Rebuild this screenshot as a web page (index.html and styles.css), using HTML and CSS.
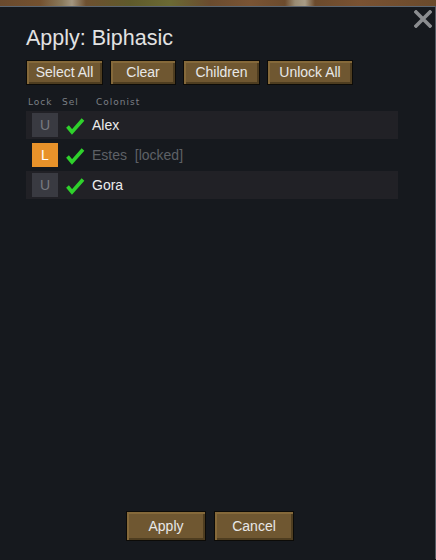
FILE: index.html
```html
<!DOCTYPE html>
<html>
<head>
<meta charset="utf-8">
<link rel="stylesheet" href="styles.css">
</head>
<body>
<div class="backdrop"></div>
<div class="window">
  <button class="close" aria-label="Close">
    <svg width="18" height="18" viewBox="0 0 18 18"><path d="M2 2 L16 16 M16 2 L2 16" stroke="#8b8d90" stroke-width="3.6" stroke-linecap="square"/></svg>
  </button>
  <h1 class="title">Apply: Biphasic</h1>
  <div class="toolbar">
    <button class="btn btn-select">Select All</button>
    <button class="btn btn-clear">Clear</button>
    <button class="btn btn-children">Children</button>
    <button class="btn btn-unlock">Unlock All</button>
  </div>
  <div class="header">
    <span class="h-lock">Lock</span>
    <span class="h-sel">Sel</span>
    <span class="h-col">Colonist</span>
  </div>
  <div class="list">
    <div class="row shaded">
      <span class="lock">U</span>
      <svg class="check" width="20" height="18" viewBox="0 0 20 18"><path d="M2.5 9.5 L7 15 L18 2.5" fill="none" stroke="#2fd12c" stroke-width="3.6" stroke-linejoin="miter"/></svg>
      <span class="name">Alex</span>
    </div>
    <div class="row">
      <span class="lock locked">L</span>
      <svg class="check" width="20" height="18" viewBox="0 0 20 18"><path d="M2.5 9.5 L7 15 L18 2.5" fill="none" stroke="#2fd12c" stroke-width="3.6" stroke-linejoin="miter"/></svg>
      <span class="name dim">Estes&nbsp;&nbsp;[locked]</span>
    </div>
    <div class="row shaded">
      <span class="lock">U</span>
      <svg class="check" width="20" height="18" viewBox="0 0 20 18"><path d="M2.5 9.5 L7 15 L18 2.5" fill="none" stroke="#2fd12c" stroke-width="3.6" stroke-linejoin="miter"/></svg>
      <span class="name">Gora</span>
    </div>
  </div>
  <div class="footer">
    <button class="btn btn-big">Apply</button>
    <button class="btn btn-big">Cancel</button>
  </div>
</div>
</body>
</html>
```
FILE: styles.css
```css
html, body {
  margin: 0;
  padding: 0;
  background: #16191e;
  font-family: "Liberation Sans", Arial, sans-serif;
}
.backdrop {
  height: 6px;
  background: linear-gradient(90deg, #6a4a2e 0px, #74512f 40px, #8a7a5c 62px, #a39680 72px, #6e5030 86px, #5f5a2b 130px, #6b6a34 170px, #6a4b2e 210px, #7a5434 250px, #6c4b2d 285px, #9a8c74 295px, #a89c86 305px, #6b4a2c 315px, #7a5232 360px, #6a4a2c 436px);
}
.window {
  position: relative;
  height: 553px;
  box-sizing: border-box;
  border-top: 1px solid #5c6672;
  border-right: 1px solid #555b63;
  background: #16191e;
  padding: 0 0 0 26px;
  display: flex;
  flex-direction: column;
}
.close {
  position: absolute;
  top: 3px;
  right: 3px;
  width: 18px;
  height: 18px;
  padding: 0;
  border: 0;
  background: none;
}
.close svg { display: block; }
.title {
  margin: 19px 0 0 0;
  font-weight: normal;
  font-size: 21.5px;
  line-height: 25px;
  color: #e2e2e2;
}
.toolbar {
  display: flex;
  gap: 7px;
  margin-top: 9px;
}
.btn {
  box-sizing: border-box;
  height: 25px;
  padding: 0;
  border: 1px solid #0c0b08;
  background: #6f5731;
  box-shadow: inset 2px 2px 0 #85693a, inset -2px -2px 0 #4e3d20;
  color: #e8e8e8;
  font-family: "Liberation Sans", Arial, sans-serif;
  font-size: 14px;
  line-height: 21px;
  text-align: center;
}
.btn-select { width: 77px; }
.btn-clear { width: 66px; }
.btn-children { width: 77px; }
.btn-unlock { width: 86px; }
.header {
  display: flex;
  margin-top: 11px;
  height: 12px;
  font-family: "DejaVu Sans", sans-serif;
  font-size: 9px;
  letter-spacing: 1px;
  line-height: 12px;
  color: #7c8086;
}
.h-lock { margin-left: 2px; width: 34px; }
.h-sel { width: 34px; }
.list {
  margin-top: 3px;
  width: 372px;
  display: flex;
  flex-direction: column;
  gap: 2px;
}
.row {
  height: 28px;
  display: flex;
  align-items: center;
  padding-left: 6px;
}
.row.shaded { background: #212126; }
.lock {
  width: 26px;
  height: 24px;
  background: #393a41;
  color: #787a80;
  font-size: 14px;
  line-height: 24px;
  text-align: center;
}
.lock.locked {
  background: #e8922a;
  color: #ffffff;
}
.check {
  margin-left: 7px;
  margin-top: 2px;
}
.name {
  margin-left: 7px;
  font-size: 14px;
  color: #ececec;
}
.name.dim { color: #5e6166; }
.footer {
  margin-top: auto;
  margin-bottom: 18px;
  margin-left: 100px;
  display: flex;
  gap: 8px;
}
.btn-big {
  width: 80px;
  height: 30px;
  line-height: 26px;
}
```
